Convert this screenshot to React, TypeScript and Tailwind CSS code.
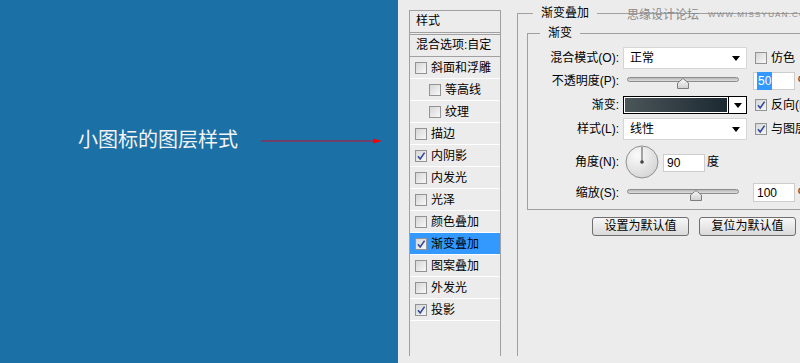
import React from 'react';

const layers = [
  { name: '斜面和浮雕', on: false, sub: false },
  { name: '等高线', on: false, sub: true },
  { name: '纹理', on: false, sub: true },
  { name: '描边', on: false, sub: false },
  { name: '内阴影', on: true, sub: false },
  { name: '内发光', on: false, sub: false },
  { name: '光泽', on: false, sub: false },
  { name: '颜色叠加', on: false, sub: false },
  { name: '渐变叠加', on: true, sub: false, active: true },
  { name: '图案叠加', on: false, sub: false },
  { name: '外发光', on: false, sub: false },
  { name: '投影', on: true, sub: false },
];

function Check({ on }: { on?: boolean }) {
  return (
    <span className="flex h-[12px] w-[12px] shrink-0 items-center justify-center border border-[#939393] bg-linear-to-br from-[#d6d6d6] to-[#f8f8f8]">
      {on && (
        <svg width="10" height="10" viewBox="0 0 10 10">
          <path d="M2 5.2 L4.2 8 L8.6 1.6" fill="none" stroke="#33499b" strokeWidth="1.6" />
        </svg>
      )}
    </span>
  );
}

function Caret() {
  return (
    <svg width="8" height="5" viewBox="0 0 8 5">
      <path d="M0 0 H8 L4 5 Z" fill="#000" />
    </svg>
  );
}

function Select({ value }: { value: string }) {
  return (
    <div className="flex h-[22px] w-[124px] items-center justify-between border border-[#d6d6d6] bg-white pl-[6px] pr-[6px]">
      <span>{value}</span>
      <Caret />
    </div>
  );
}

function Slider({ pos }: { pos: number }) {
  return (
    <div className="relative ml-[4px] h-[18px] w-[112px]">
      <div className="mt-[5px] h-[5px] w-full rounded-full border border-[#8c8c8c] bg-linear-to-b from-[#b9b9b9] to-[#dedede]" />
      <svg className="absolute top-[6px]" style={{ left: pos - 6 }} width="12" height="11" viewBox="0 0 12 11">
        <defs>
          <linearGradient id="th" x1="0" y1="0" x2="0" y2="1">
            <stop offset="0" stopColor="#fafafa" />
            <stop offset="1" stopColor="#cfcfcf" />
          </linearGradient>
        </defs>
        <path d="M6 0.5 L11.5 5 V10.5 H0.5 V5 Z" fill="url(#th)" stroke="#7d7d7d" />
      </svg>
    </div>
  );
}

function NumBox({ children, w = 42, h = 18 }: { children: React.ReactNode; w?: number; h?: number }) {
  return (
    <div
      className="flex items-center border border-[#cdcdcd] bg-white pl-[3px]"
      style={{ width: w, height: h }}
    >
      {children}
    </div>
  );
}

function Label({ children }: { children: React.ReactNode }) {
  return <div className="w-[95px] shrink-0 pr-[4px] text-right">{children}</div>;
}

export default function App() {
  return (
    <div className="flex h-[363px] w-[800px] overflow-hidden bg-[#ececec] font-['Liberation_Sans','Noto_Sans_CJK_SC',sans-serif] text-[12px] leading-[18px] text-black">
      {/* ---------- Blue caption ---------- */}
      <div className="flex w-[398px] shrink-0 items-start bg-[#1b70a6]">
        <div className="ml-[78px] mt-[128px] flex h-[24px] items-center">
          <span className="text-[20px] leading-[24px] text-[#f3f3f3]">小图标的图层样式</span>
          <svg className="ml-[23px]" width="121" height="8" viewBox="0 0 121 8">
            <line x1="0" y1="5" x2="113" y2="5" stroke="#c8102e" strokeWidth="1" />
            <path d="M112 2.5 L121 5 L112 7.5 Z" fill="#ff0000" />
          </svg>
        </div>
      </div>

      {/* ---------- Dialog ---------- */}
      <div className="relative flex flex-1 items-start">
        {/* style list */}
        <div className="ml-[11px] mt-[10px] h-[346px] w-[92px] shrink-0 border-x border-t border-[#a0a0a0]">
          <div className="h-[22px] border-b border-[#a0a0a0] pl-[6px] leading-[21px]">样式</div>
          <div className="mt-[1px] h-[23px] border-y border-[#a0a0a0] pl-[6px] leading-[21px]">混合选项:自定</div>
          {layers.map((l) => (
            <div
              key={l.name}
              className={`flex h-[22px] items-center gap-[4px] border-b border-white ${l.sub ? 'pl-[19px]' : 'pl-[5px]'} ${l.active ? 'bg-[#3399ff]' : ''}`}
            >
              <Check on={l.on} />
              <span>{l.name}</span>
            </div>
          ))}
        </div>

        {/* gradient overlay group */}
        <fieldset className="ml-[16px] mt-[4px] h-[352px] w-[320px] shrink-0 border-l border-t border-[#a0a0a0]">
          <legend className="ml-[15px] px-[8px] text-[12px] leading-[18px]">渐变叠加</legend>

          <fieldset className="ml-[9px] mt-[2px] w-[300px] border-y border-l border-[#a0a0a0] pb-[7px]">
            <legend className="ml-[12px] px-[8px] leading-[18px]">渐变</legend>

            <div className="mt-[5px] flex h-[22px] items-center">
              <Label>混合模式(O):</Label>
              <Select value="正常" />
              <div className="ml-[8px] flex items-center gap-[4px]">
                <Check />
                <span>仿色</span>
              </div>
            </div>

            <div className="mt-[3px] flex h-[18px] items-center">
              <Label>不透明度(P):</Label>
              <Slider pos={56} />
              <div className="ml-[14px]">
                <NumBox>
                  <span className="bg-[#3399ff] px-px text-white">50</span>
                </NumBox>
              </div>
              <span className="ml-[3px]">%</span>
            </div>

            <div className="mt-[6px] flex h-[18px] items-center">
              <Label>渐变:</Label>
              <div className="flex h-[18px] w-[124px] border border-black bg-white">
                <div className="m-px flex-1 bg-linear-to-r from-[#4b5659] to-[#1d2932]" />
                <div className="flex w-[18px] items-center justify-center border-l border-black">
                  <Caret />
                </div>
              </div>
              <div className="ml-[8px] flex items-center gap-[4px]">
                <Check on />
                <span className="whitespace-nowrap">反向(R)</span>
              </div>
            </div>

            <div className="mt-[4px] flex h-[22px] items-center">
              <Label>样式(L):</Label>
              <Select value="线性" />
              <div className="ml-[8px] flex items-center gap-[4px]">
                <Check on />
                <span className="whitespace-nowrap">与图层对齐(I)</span>
              </div>
            </div>

            <div className="mt-[5px] flex h-[33px] items-center">
              <Label>角度(N):</Label>
              <svg className="ml-[2px]" width="34" height="34" viewBox="0 0 34 34">
                <defs>
                  <radialGradient id="dial" cx="0.35" cy="0.3" r="0.8">
                    <stop offset="0" stopColor="#fbfbfb" />
                    <stop offset="1" stopColor="#d2d2d2" />
                  </radialGradient>
                </defs>
                <circle cx="17" cy="17" r="16" fill="url(#dial)" stroke="#8f8f8f" />
                <line x1="17" y1="17" x2="17" y2="2" stroke="#555" strokeWidth="1" />
                <circle cx="17" cy="17" r="1.8" fill="#444" />
              </svg>
              <div className="ml-[4px] mt-[2px]">
                <NumBox>90</NumBox>
              </div>
              <span className="ml-[2px]">度</span>
            </div>

            <div className="mt-[5px] flex h-[19px] items-center">
              <Label>缩放(S):</Label>
              <Slider pos={69} />
              <div className="ml-[14px]">
                <NumBox h={19}>100</NumBox>
              </div>
              <span className="ml-[3px]">%</span>
            </div>
          </fieldset>

          <div className="ml-[74px] mt-[7px] flex gap-[10px]">
            <button className="h-[19px] w-[97px] rounded-[3px] border border-[#6f6f6f] bg-linear-to-b from-[#f7f7f7] to-[#dadada] leading-[17px]">
              设置为默认值
            </button>
            <button className="h-[19px] w-[97px] rounded-[3px] border border-[#6f6f6f] bg-linear-to-b from-[#f7f7f7] to-[#dadada] leading-[17px]">
              复位为默认值
            </button>
          </div>
        </fieldset>

        {/* watermark */}
        <div className="absolute left-[229px] top-[6px] flex items-center gap-[9px] text-[#8a8a8a]">
          <span className="text-[12px]">思缘设计论坛</span>
          <span className="text-[8px] tracking-[1.2px]">WWW.MISSYUAN.COM</span>
        </div>
      </div>
    </div>
  );
}
